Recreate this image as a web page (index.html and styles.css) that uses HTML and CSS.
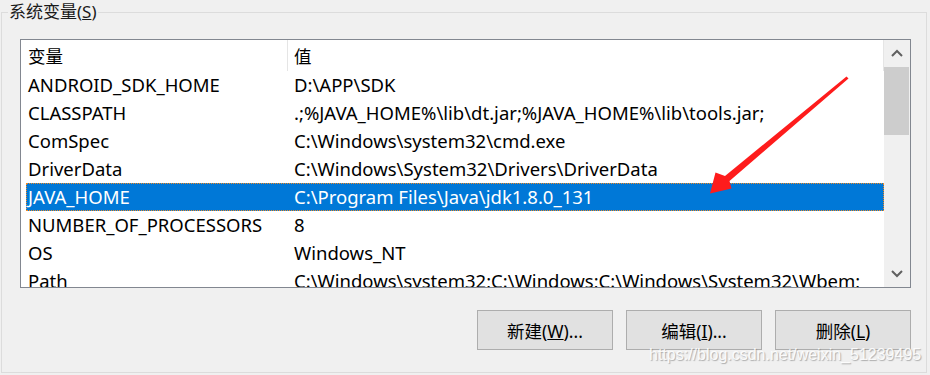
FILE: index.html
```html
<!DOCTYPE html>
<html lang="zh-CN">

<head>
    <meta charset="UTF-8">
    <title>系统变量</title>
    <link rel="stylesheet" href="styles.css">
</head>

<body>

    <fieldset class="group">
        <legend>系统变量(<u>S</u>)</legend>

        <div class="listbox">
            <div class="list-main">
                <div class="list-header">
                    <div class="col-name">变量</div>
                    <div class="col-sep"></div>
                    <div class="col-value">值</div>
                </div>
                <div class="list-body">
                    <div class="row"><span class="cell-name">ANDROID_SDK_HOME</span><span class="cell-value">D:\APP\SDK</span></div>
                    <div class="row"><span class="cell-name">CLASSPATH</span><span class="cell-value">.;%JAVA_HOME%\lib\dt.jar;%JAVA_HOME%\lib\tools.jar;</span></div>
                    <div class="row"><span class="cell-name">ComSpec</span><span class="cell-value">C:\Windows\system32\cmd.exe</span></div>
                    <div class="row"><span class="cell-name">DriverData</span><span class="cell-value">C:\Windows\System32\Drivers\DriverData</span></div>
                    <div class="row selected"><span class="cell-name">JAVA_HOME</span><span class="cell-value">C:\Program Files\Java\jdk1.8.0_131</span></div>
                    <div class="row"><span class="cell-name">NUMBER_OF_PROCESSORS</span><span class="cell-value">8</span></div>
                    <div class="row"><span class="cell-name">OS</span><span class="cell-value">Windows_NT</span></div>
                    <div class="row"><span class="cell-name">Path</span><span class="cell-value">C:\Windows\system32;C:\Windows;C:\Windows\System32\Wbem;</span></div>
                </div>
            </div>
            <div class="scrollbar">
                <div class="sb-btn">
                    <svg width="12" height="8" viewBox="0 0 12 8"><path d="M1 7 L6 2 L11 7" fill="none" stroke="#606060" stroke-width="2"/></svg>
                </div>
                <div class="sb-thumb"></div>
                <div class="sb-track"></div>
                <div class="sb-btn">
                    <svg width="12" height="8" viewBox="0 0 12 8"><path d="M1 1 L6 6 L11 1" fill="none" stroke="#606060" stroke-width="2"/></svg>
                </div>
            </div>
        </div>

        <div class="buttons">
            <button>新建(<u>W</u>)...</button>
            <button>编辑(<u>I</u>)...</button>
            <button>删除(<u>L</u>)</button>
        </div>
    </fieldset>

    <!-- flèche rouge par-dessus la liste -->
    <svg class="arrow" width="930" height="375" viewBox="0 0 930 375">
        <polygon points="846.5,76.5 848.5,78.5 729.5,181 731.5,188.5 710,193.5 715.5,172.5 725,176" fill="#fe1c1c"/>
    </svg>

    <div class="watermark">https://blog.csdn.net/weixin_51239495</div>

</body>

</html>
```

FILE: styles.css
```css
body {
    margin: 0;
    background-color: #f0f0f0;
    font-family: 'Noto Sans', 'Noto Sans CJK SC', sans-serif;
    font-size: 18.5px;
    color: #000;
    width: 930px;
    height: 375px;
    overflow: hidden;
    position: relative;
}

.group {
    box-sizing: border-box;
    margin: 0 0 0 1px;
    width: 925px;
    height: 373px;
    padding: 15px 15px 0 18px;
    border: 1px solid #dcdcdc;
}

.group legend {
    padding: 0 1px;
    margin-left: -12px;
    line-height: 24px;
    font-size: 17px;
    color: #1a1a1a;
}

.listbox {
    display: flex;
    width: 891px;
    height: 249px;
    box-sizing: border-box;
    border: 1px solid #828790;
    background-color: #fff;
    overflow: hidden;
}

.list-main {
    flex: 1;
    overflow: hidden;
}

.list-header {
    display: flex;
    height: 31px;
    align-items: center;
    border-right: 1px solid #e5e5e5;
    font-size: 17.5px;
}

.col-name {
    width: 259px;
    padding-left: 7px;
}

.col-sep {
    width: 1px;
    height: 31px;
    background-color: #e5e5e5;
}

.col-value {
    padding-left: 6px;
}

.list-body {
    padding-left: 5px;
}

.row {
    display: flex;
    height: 28px;
    padding-bottom: 2px;
    align-items: center;
    box-sizing: border-box;
    white-space: nowrap;
}

.cell-name {
    width: 260px;
    padding-left: 2px;
    flex-shrink: 0;
}

.cell-value {
    padding-left: 6px;
}

.row.selected {
    background-color: #0078d7;
    color: #fff;
    border: 1px dotted #f08a24;
}

.row.selected .cell-name {
    padding-left: 1px;
}

.scrollbar {
    width: 26px;
    display: flex;
    flex-direction: column;
    background-color: #f0f0f0;
}

.sb-btn {
    height: 26px;
    display: flex;
    align-items: center;
    justify-content: center;
}

.sb-thumb {
    height: 68px;
    margin-top: 1px;
    margin-right: 1px;
    background-color: #cdcdcd;
}

.sb-track {
    flex: 1;
}

.buttons {
    display: flex;
    justify-content: flex-end;
    gap: 13px;
    margin-top: 22px;
}

button {
    width: 136px;
    height: 40px;
    border: 1px solid #adadad;
    background-color: #e1e1e1;
    font-family: 'Noto Sans', 'Noto Sans CJK SC', sans-serif;
    font-size: 17.5px;
    color: #000;
    padding: 0;
}

.arrow {
    position: absolute;
    left: 0;
    top: 0;
    pointer-events: none;
}

.watermark {
    position: absolute;
    left: 649px;
    top: 346px;
    font-family: 'Liberation Sans', Arial, sans-serif;
    font-size: 16px;
    color: rgba(255, 255, 255, 0.9);
    text-shadow: 1px 1px 1px rgba(90, 90, 90, 0.45);
}
```
